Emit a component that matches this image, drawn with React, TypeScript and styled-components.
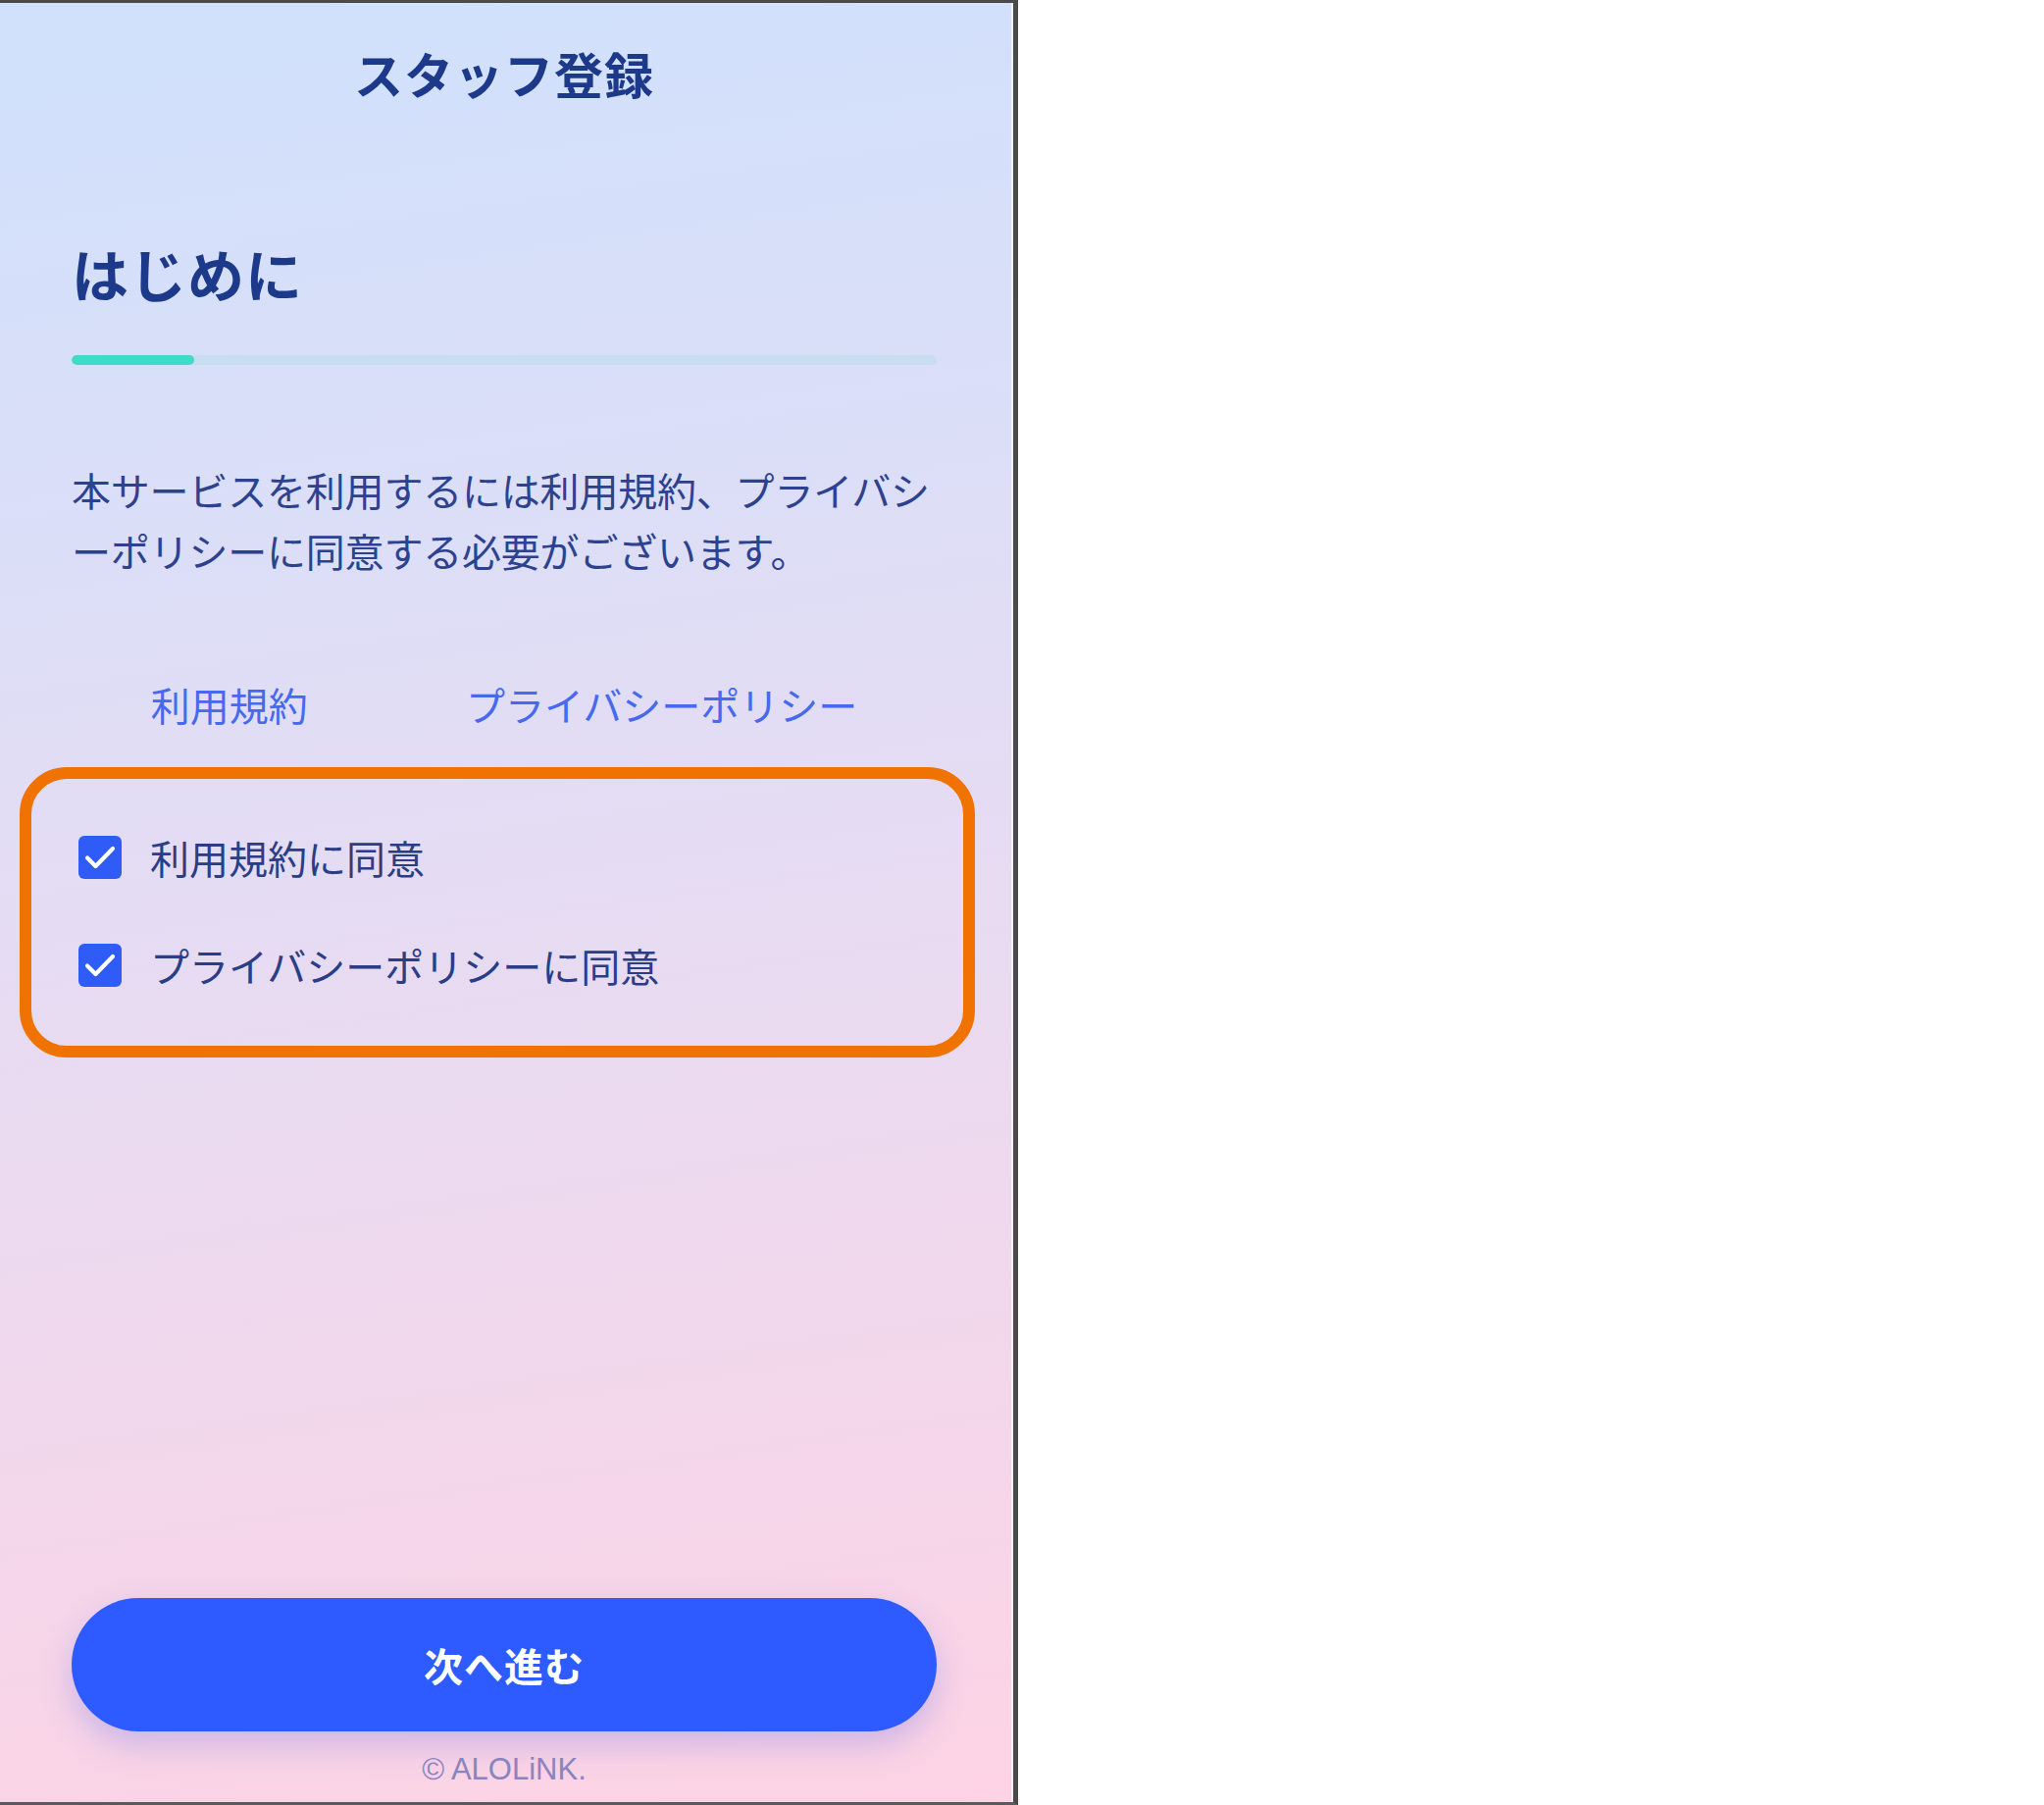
import React from "react";
import styled, { createGlobalStyle } from "styled-components";

const GlobalStyle = createGlobalStyle`
  html, body {
    margin: 0;
    padding: 0;
    background: #ffffff;
  }
  body {
    font-family: "Noto Sans CJK JP", "Noto Sans", sans-serif;
  }
`;

const Screen = styled.div`
  box-sizing: border-box;
  width: 1038px;
  height: 1840px;
  border-top: 3px solid #4a4a4a;
  border-right: 5px solid #4a4a4a;
  border-bottom: 3px solid #5a5a5a;
  box-shadow: inset -2px 0 0 rgba(255, 255, 255, 0.6);
  background: linear-gradient(172deg, #d0e1fc 0%, #dcdef7 30%, #e8dbf1 55%, #f4d6ea 80%, #fdd3e4 100%);
  display: flex;
  flex-direction: column;
  padding: 0 78px 13px 73px;
`;

const Title = styled.h1`
  margin: 37px 0 0;
  font-size: 50px;
  line-height: 68px;
  font-weight: 700;
  color: #1d3a8a;
  text-align: center;
  letter-spacing: 1px;
`;

const Heading = styled.h2`
  margin: 130px 0 0;
  font-size: 58px;
  line-height: 80px;
  font-weight: 700;
  color: #1d3a8a;
  letter-spacing: 1px;
`;

const Track = styled.div`
  margin-top: 44px;
  height: 10px;
  border-radius: 5px;
  background: #c8ddf0;
  overflow: hidden;
`;

const Fill = styled.div`
  height: 100%;
  border-radius: 5px;
  background: #40dac8;
`;

const Lead = styled.p`
  margin: 96px 0 0;
  font-size: 40px;
  line-height: 62px;
  color: #2d428f;
  white-space: nowrap;
  letter-spacing: -0.2px;
`;

const Links = styled.div`
  margin-top: 98px;
  display: flex;
  justify-content: space-around;
`;

const LinkText = styled.a`
  font-size: 40px;
  line-height: 56px;
  color: #4769ee;
  text-decoration: none;
  cursor: pointer;
`;

const Highlight = styled.div`
  margin: 36px -39px 0 -53px;
  border: 12px solid #f07200;
  border-radius: 48px;
  padding: 50px 0 52px 48px;
  display: flex;
  flex-direction: column;
  gap: 50px;
`;

const CheckRow = styled.label`
  display: flex;
  align-items: center;
  height: 60px;
  gap: 29px;
  cursor: pointer;
`;

const Box = styled.span`
  width: 44px;
  height: 44px;
  border-radius: 6px;
  background: #2f5cf6;
  display: flex;
  flex-shrink: 0;
`;

const CheckLabel = styled.span`
  font-size: 40px;
  line-height: 60px;
  color: #2b3d86;
`;

const Spacer = styled.div`
  flex: 1;
`;

const NextButton = styled.button`
  height: 136px;
  width: 100%;
  border: none;
  border-radius: 68px;
  background: #2d5bff;
  color: #ffffff;
  font-family: "Noto Sans CJK JP", sans-serif;
  font-size: 40px;
  font-weight: 700;
  letter-spacing: 1px;
  box-shadow: 0 14px 32px rgba(90, 100, 230, 0.28);
  cursor: pointer;
`;

const Footer = styled.div`
  margin-top: 19px;
  text-align: center;
  font-family: "Liberation Sans", Arial, sans-serif;
  font-size: 31px;
  line-height: 40px;
  color: #8a84bf;
`;

const Check = () => (
  <svg width="44" height="44" viewBox="0 0 44 44">
    <path d="M9 22.5 L17.5 31 L35 13" fill="none" stroke="#ffffff" strokeWidth="4.2" strokeLinecap="round" strokeLinejoin="round" />
  </svg>
);

const Agreement = (props: { label: string }) => (
  <CheckRow>
    <Box>
      <Check />
    </Box>
    <CheckLabel>{props.label}</CheckLabel>
  </CheckRow>
);

export default function App() {
  const progress = 125 / 882;
  return (
    <>
      <GlobalStyle />
      <Screen>
        <Title>スタッフ登録</Title>
        <Heading>はじめに</Heading>
        <Track>
          <Fill style={{ width: `${progress * 100}%` }} />
        </Track>
        <Lead>
          本サービスを利用するには利用規約、プライバシ
          <br />
          ーポリシーに同意する必要がございます。
        </Lead>
        <Links>
          <LinkText>利用規約</LinkText>
          <LinkText>プライバシーポリシー</LinkText>
        </Links>
        <Highlight>
          <Agreement label="利用規約に同意" />
          <Agreement label="プライバシーポリシーに同意" />
        </Highlight>
        <Spacer />
        <NextButton>次へ進む</NextButton>
        <Footer>© ALOLiNK.</Footer>
      </Screen>
    </>
  );
}
